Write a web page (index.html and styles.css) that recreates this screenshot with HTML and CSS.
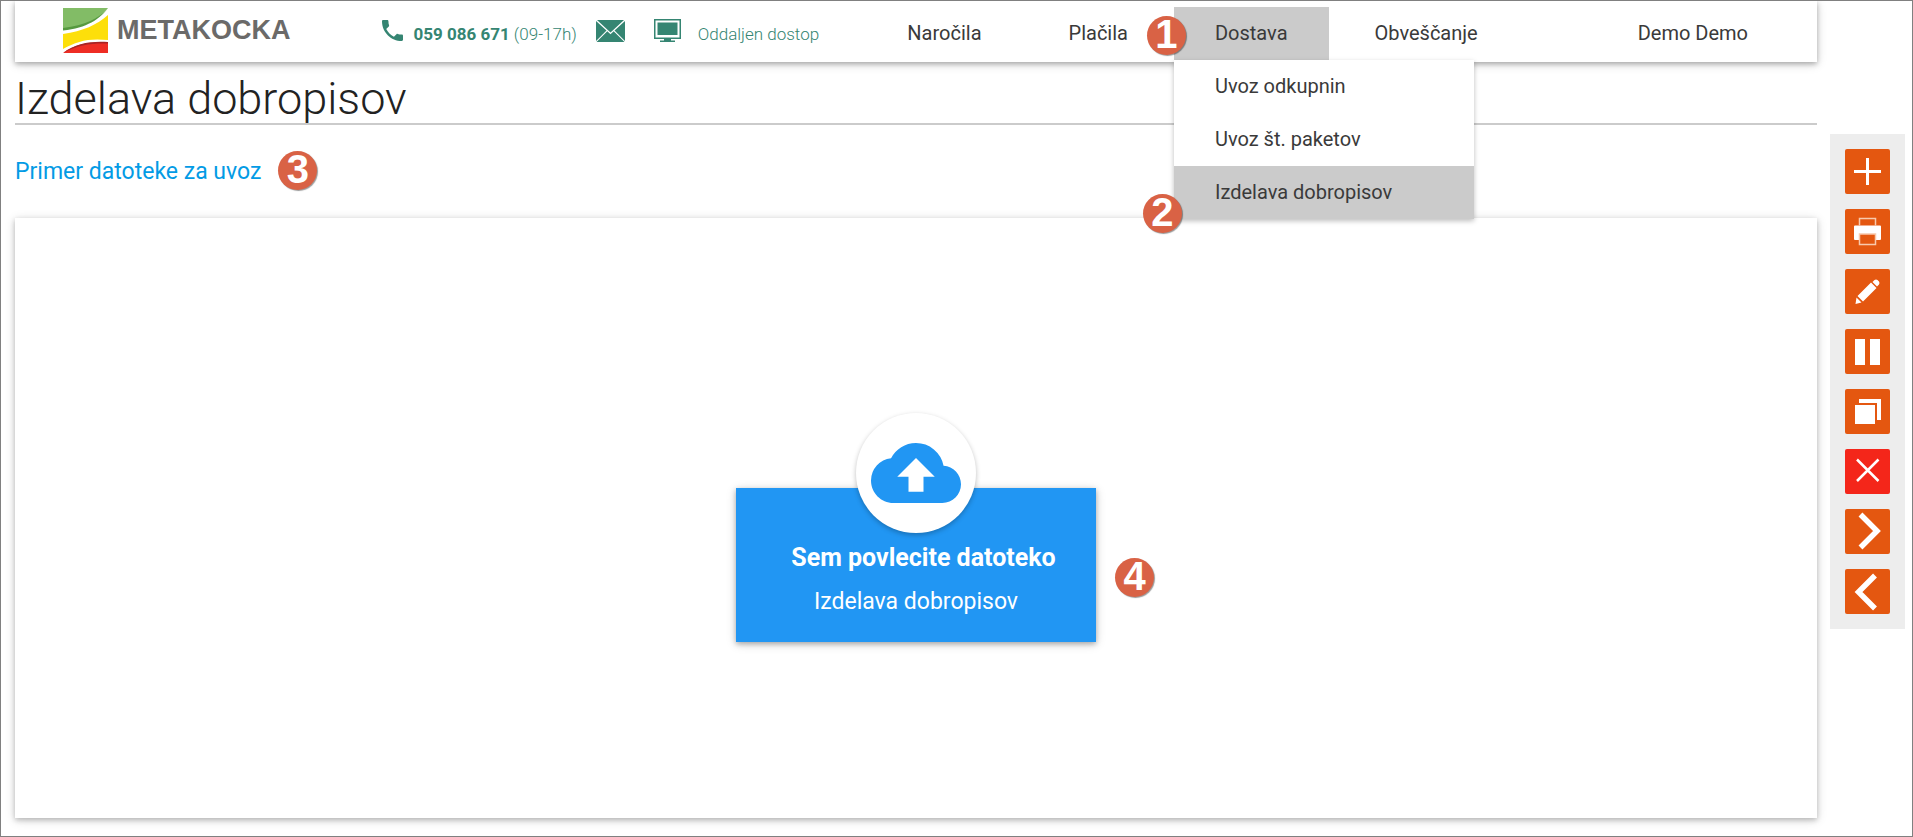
FILE: index.html
```html
<!DOCTYPE html>
<html lang="sl">
<head>
  <meta charset="UTF-8">
  <meta name="viewport" content="width=device-width, initial-scale=1.0">
  <title>Metakocka - Izdelava dobropisov</title>
  <link rel="stylesheet" href="styles.css">
</head>
<body>

  <div class="main">
    <!-- Glava -->
    <header class="header">
      <a href="#" class="logo">
        <svg class="logo-mark" viewBox="0 0 45 45" aria-hidden="true">
          <path fill="#82bc66" d="M0 0h45C36 11 22 19 0 22z"/>
          <path fill="#55993f" d="M45 0C36 11 22 17 0 20v2.500C24 20 37 11 45 0z"/>
          <path fill="#fddf0a" d="M0 26C20 23 34 17 45 7v25C26 30 14 33 0 41z"/>
          <path fill="#ee2d24" d="M0 45C13 35 28 34 45 35v10z"/>
          <path fill="#a82424" d="M0 45C13 35 28 33 45 34v1.500C28 35 15 37 0 45z"/>
        </svg>
        <span class="logo-text">METAKOCKA</span>
      </a>

      <div class="contact">
        <svg class="icon-phone" viewBox="3 3 18 18" aria-hidden="true">
          <path fill="currentColor" d="M6.620 10.790c1.440 2.830 3.760 5.140 6.590 6.590l2.200-2.200c.27-.27.67-.36 1.020-.24 1.120.37 2.330.57 3.570.57.55 0 1 .45 1 1V20c0 .55-.45 1-1 1-9.390 0-17-7.610-17-17 0-.55.45-1 1-1h3.500c.55 0 1 .45 1 1 0 1.250.2 2.450.57 3.570.11.35.03.74-.25 1.020l-2.200 2.200z"/>
        </svg>
        <span class="phone"><b>059 086 671</b> (09-17h)</span>
        <a href="#" class="mail" aria-label="E-mail">
          <svg class="icon-mail" viewBox="0 0 29 22" aria-hidden="true">
            <path fill="currentColor" d="M1 0h27L14.500 12.500zM0 1l10.500 9.500L0 21zM29 1l-10.500 9.500L29 21zM11.300 11.300l3.200 2.900 3.200-2.900L28.500 22H.5z"/>
          </svg>
        </a>
        <a href="#" class="remote">
          <svg class="icon-screen" viewBox="0 0 27 23" aria-hidden="true">
            <rect x=".75" y=".75" width="25.500" height="18.500" fill="none" stroke="currentColor" stroke-width="1.500"/>
            <path fill="currentColor" d="M3.500 3.500h20v12.500h-20zM10 20h7v1.500h4V23H6v-1.500h4z"/>
          </svg>
          <span>Oddaljen dostop</span>
        </a>
      </div>

      <nav class="nav">
        <a href="#" class="nav-link">Naročila</a>
        <a href="#" class="nav-link">Plačila</a>
        <div class="nav-item">
          <a href="#" class="nav-link active">Dostava</a>
          <div class="dropdown">
            <a href="#" class="dropdown-link">Uvoz odkupnin</a>
            <a href="#" class="dropdown-link">Uvoz št. paketov</a>
            <a href="#" class="dropdown-link active">Izdelava dobropisov</a>
            <span class="badge badge-2">2</span>
          </div>
          <span class="badge badge-1">1</span>
        </div>
        <a href="#" class="nav-link">Obveščanje</a>
      </nav>
      <a href="#" class="nav-link">Demo Demo</a>
    </header>

    <h1 class="title">Izdelava dobropisov</h1>

    <div class="sample">
      <a href="#" class="sample-link">Primer datoteke za uvoz</a>
      <span class="badge">3</span>
    </div>

    <!-- Nalaganje datoteke -->
    <section class="card">
      <div class="upload">
        <div class="upload-icon">
          <svg viewBox="0 0 24 24" aria-hidden="true">
            <path fill="#2196f3" d="M19.350 10.040A7.490 7.490 0 0 0 12 4C9.110 4 6.600 5.640 5.350 8.040A5.994 5.994 0 0 0 0 14c0 3.310 2.690 6 6 6h13c2.760 0 5-2.240 5-5 0-2.640-2.050-4.780-4.650-4.960zM14 13v4h-4v-4H7l5-5 5 5h-3z"/>
          </svg>
        </div>
        <p class="upload-title">Sem povlecite datoteko</p>
        <p class="upload-text">Izdelava dobropisov</p>
        <span class="badge badge-4">4</span>
      </div>
    </section>
  </div>

  <!-- Orodna vrstica -->
  <aside class="toolbar">
    <button class="tool" aria-label="Dodaj">
      <svg viewBox="0 0 45 45"><path d="M22.500 9v27M9 22.500h27" stroke="#fff" stroke-width="3"/></svg>
    </button>
    <button class="tool" aria-label="Natisni">
      <svg viewBox="0 0 45 45">
        <path fill="#fff" d="M9 17.500q0-1 1-1h25q1 0 1 1V30q0 1-1 1h-4v-6H14v6h-4q-1 0-1-1z"/>
        <path fill="none" stroke="#f8c9ad" stroke-width="1.500" d="M14.500 16.500v-7h16v7M14.500 25v10.500h16V25z"/>
      </svg>
    </button>
    <button class="tool" aria-label="Uredi">
      <svg viewBox="0 0 45 45"><path fill="#fff" d="M12.500 27L26 13.500l5.500 5.500L18 32.500zM27.500 13l2-2q1.500-1 3 0l1.500 1.500q1 1.500 0 3l-2 2zM11.500 28.500l5 5-6 1.500z"/></svg>
    </button>
    <button class="tool" aria-label="Premor">
      <svg viewBox="0 0 45 45"><path fill="#fff" d="M10 10h10v26H10zM25 10h10v26H25z"/></svg>
    </button>
    <button class="tool" aria-label="Kopiraj">
      <svg viewBox="0 0 45 45"><path fill="#fff" d="M10 16h20v19H10zM14 10h22v21h-4V14H14z"/></svg>
    </button>
    <button class="tool tool-delete" aria-label="Izbriši">
      <svg viewBox="0 0 45 45"><path d="M12 10.500l21.500 21.500M33.500 10.500L12 32" stroke="#fff" stroke-width="2.500"/></svg>
    </button>
    <button class="tool" aria-label="Naprej">
      <svg viewBox="0 0 45 45"><path d="M15.500 5.500L32 22 15.500 38.500" fill="none" stroke="#fff" stroke-width="5.500"/></svg>
    </button>
    <button class="tool" aria-label="Nazaj">
      <svg viewBox="0 0 45 45"><path d="M30 6.500L13.500 23 30 39.500" fill="none" stroke="#fff" stroke-width="5.500"/></svg>
    </button>
  </aside>

</body>
</html>
```
FILE: styles.css
```css
* {
  box-sizing: border-box;
}
body {
  font-family: 'Roboto', sans-serif;
  margin: 0;
  padding: 0 7px 18px 14px;
  min-height: 100vh;
  border: 1px solid #808080;
  background-color: #fff;
  color: #3a3a3a;
  display: flex;
  gap: 13px;
}
a {
  color: inherit;
  text-decoration: none;
}
svg {
  display: block;
}
.main {
  flex: 1;
  display: flex;
  flex-direction: column;
}

/* Glava */
.header {
  position: relative;
  z-index: 1;
  display: flex;
  align-items: flex-end;
  height: 61px;
  padding: 0 28px 2px 48px;
  box-shadow: 0 2px 10px rgba(0, 0, 0, 0.16), 0 2px 5px rgba(0, 0, 0, 0.26);
}
.logo {
  display: flex;
  align-items: center;
  align-self: center;
  gap: 9px;
}
.logo-mark {
  width: 45px;
  height: 45px;
}
.logo-text {
  font-family: 'Liberation Sans', sans-serif;
  font-size: 27px;
  font-weight: bold;
  color: #6b6a69;
}
.contact {
  display: flex;
  align-items: center;
  align-self: center;
  margin-left: 92px;
  font-size: 17px;
  line-height: 24px;
  font-weight: 300;
  color: #358572;
}
.contact b {
  font-weight: 700;
}
.icon-phone {
  width: 21px;
  height: 21px;
}
.phone {
  margin: 6px 19px 0 10px;
}
.icon-mail {
  width: 29px;
  height: 22px;
}
.remote {
  display: flex;
  align-items: center;
  gap: 17px;
  margin-left: 29px;
}
.remote span {
  margin-top: 6px;
}
.icon-screen {
  width: 27px;
  height: 23px;
}

/* Meni */
.nav {
  display: flex;
  gap: 5px;
  margin-left: auto;
  margin-right: 78px;
}
.nav-item {
  position: relative;
}
.nav-link,
.dropdown-link {
  display: block;
  padding: 0 41px;
  font-size: 20px;
  line-height: 53px;
  white-space: nowrap;
}
.nav-link.active,
.dropdown-link.active {
  background-color: #cbcbcb;
}
.dropdown {
  position: absolute;
  top: 100%;
  left: 0;
  width: 300px;
  background-color: #fff;
  box-shadow: 0 2px 5px rgba(0, 0, 0, 0.26);
}

/* Oznake korakov */
.badge {
  width: 39px;
  height: 39px;
  border-radius: 50%;
  background-color: #d96245;
  box-shadow: 1px 1px 1px rgba(0, 0, 0, 0.4);
  color: #fff;
  font-family: 'Liberation Sans', sans-serif;
  font-size: 40px;
  font-weight: bold;
  line-height: 37px;
  text-align: center;
}
.badge-1 {
  position: absolute;
  top: 9px;
  left: -27px;
}
.badge-2 {
  position: absolute;
  bottom: -14px;
  left: -31px;
}
.badge-4 {
  position: absolute;
  top: 70px;
  right: -58px;
}

/* Vsebina */
.title {
  margin: 0;
  padding-top: 12px;
  border-bottom: 2px solid #cbcbcb;
  font-size: 45px;
  line-height: 49px;
  font-weight: 300;
  color: #222;
}
.sample {
  display: flex;
  align-items: center;
  gap: 17px;
  padding: 26px 0 28px;
}
.sample-link {
  padding-top: 2px;
  font-size: 23px;
  color: #039be5;
}
.card {
  flex: 1;
  display: flex;
  justify-content: center;
  align-items: center;
  padding: 100px 20px 6px;
  box-shadow: 0 2px 10px rgba(0, 0, 0, 0.16), 0 2px 5px rgba(0, 0, 0, 0.2);
}
.upload {
  position: relative;
  width: 360px;
  padding-bottom: 23px;
  background-color: #2196f3;
  box-shadow: 0 2px 5px rgba(0, 0, 0, 0.26), 0 2px 10px rgba(0, 0, 0, 0.16);
  color: #fff;
  text-align: center;
}
.upload-icon {
  width: 120px;
  height: 120px;
  margin: -75px auto 0;
  padding: 15px;
  border-radius: 50%;
  background-color: #fff;
  box-shadow: 0 2px 5px rgba(0, 0, 0, 0.26);
}
.upload-title {
  margin: 0;
  padding: 8px 0 0 15px;
  font-size: 25px;
  line-height: 34px;
  font-weight: bold;
}
.upload-text {
  margin: 10px 0 0;
  font-size: 23px;
  line-height: 34px;
}

/* Orodna vrstica */
.toolbar {
  align-self: flex-start;
  display: flex;
  flex-direction: column;
  gap: 15px;
  margin-top: 133px;
  padding: 15px;
  background-color: #ededed;
}
.tool {
  width: 45px;
  height: 45px;
  padding: 0;
  border: none;
  border-radius: 2px;
  background-color: #e45710;
  cursor: pointer;
}
.tool:hover {
  background-color: #c94a0b;
}
.tool-delete {
  background-color: #f4261a;
}
```
